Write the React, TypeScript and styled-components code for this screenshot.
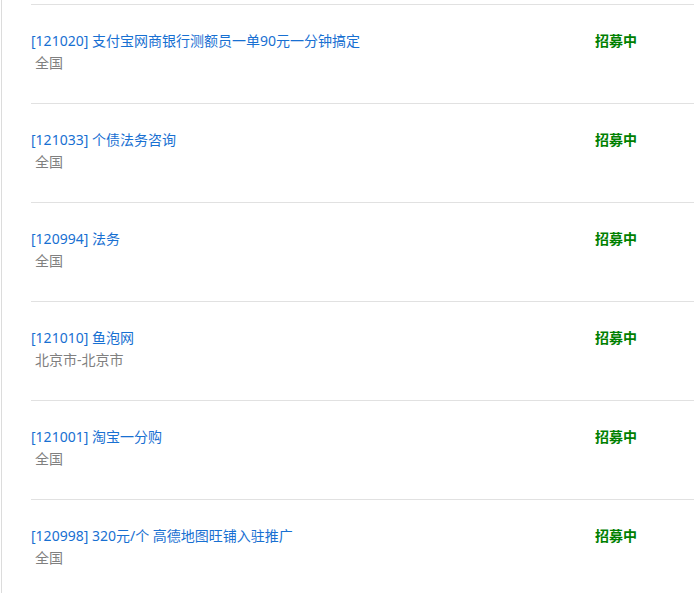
import styled, { createGlobalStyle } from 'styled-components';

interface Task {
  id: string;
  title: string;
  area: string;
  status: string;
}

const tasks: Task[] = [
  { id: '121020', title: '支付宝网商银行测额员一单90元一分钟搞定', area: '全国', status: '招募中' },
  { id: '121033', title: '个债法务咨询', area: '全国', status: '招募中' },
  { id: '120994', title: '法务', area: '全国', status: '招募中' },
  { id: '121010', title: '鱼泡网', area: '北京市-北京市', status: '招募中' },
  { id: '121001', title: '淘宝一分购', area: '全国', status: '招募中' },
  { id: '120998', title: '320元/个 高德地图旺铺入驻推广', area: '全国', status: '招募中' },
];

const GlobalStyle = createGlobalStyle`
  html, body {
    margin: 0;
    padding: 0;
    background: #fff;
    overflow: hidden;
  }
  body {
    font-family: "Noto Sans", "Noto Sans CJK SC", sans-serif;
    font-size: 14px;
  }
`;

const Page = styled.div`
  margin-left: 1px;
  border-left: 1px solid #dcdcdc;
  min-height: 100vh;
  padding-top: 4px;
  box-sizing: border-box;
`;

const List = styled.ul`
  list-style: none;
  margin: 0 0 0 29px;
  padding: 0;
`;

const Item = styled.li`
  display: grid;
  grid-template-columns: 1fr 99px;
  border-top: 1px solid #e1e1e1;
  padding: 26px 0 30px;
`;

const Info = styled.div`
  display: flex;
  flex-direction: column;
`;

const Title = styled.a`
  color: #1870d2;
  line-height: 20px;
  text-decoration: none;
  cursor: pointer;
`;

const Area = styled.span`
  color: #808080;
  line-height: 20px;
  margin-top: 2px;
  padding-left: 4px;
`;

const Status = styled.span`
  color: #008000;
  font-weight: bold;
  line-height: 20px;
`;

export default function App() {
  return (
    <>
      <GlobalStyle />
      <Page>
        <List>
          {tasks.map((t) => (
            <Item key={t.id}>
              <Info>
                <Title>
                  [{t.id}] {t.title}
                </Title>
                <Area>{t.area}</Area>
              </Info>
              <Status>{t.status}</Status>
            </Item>
          ))}
        </List>
      </Page>
    </>
  );
}
